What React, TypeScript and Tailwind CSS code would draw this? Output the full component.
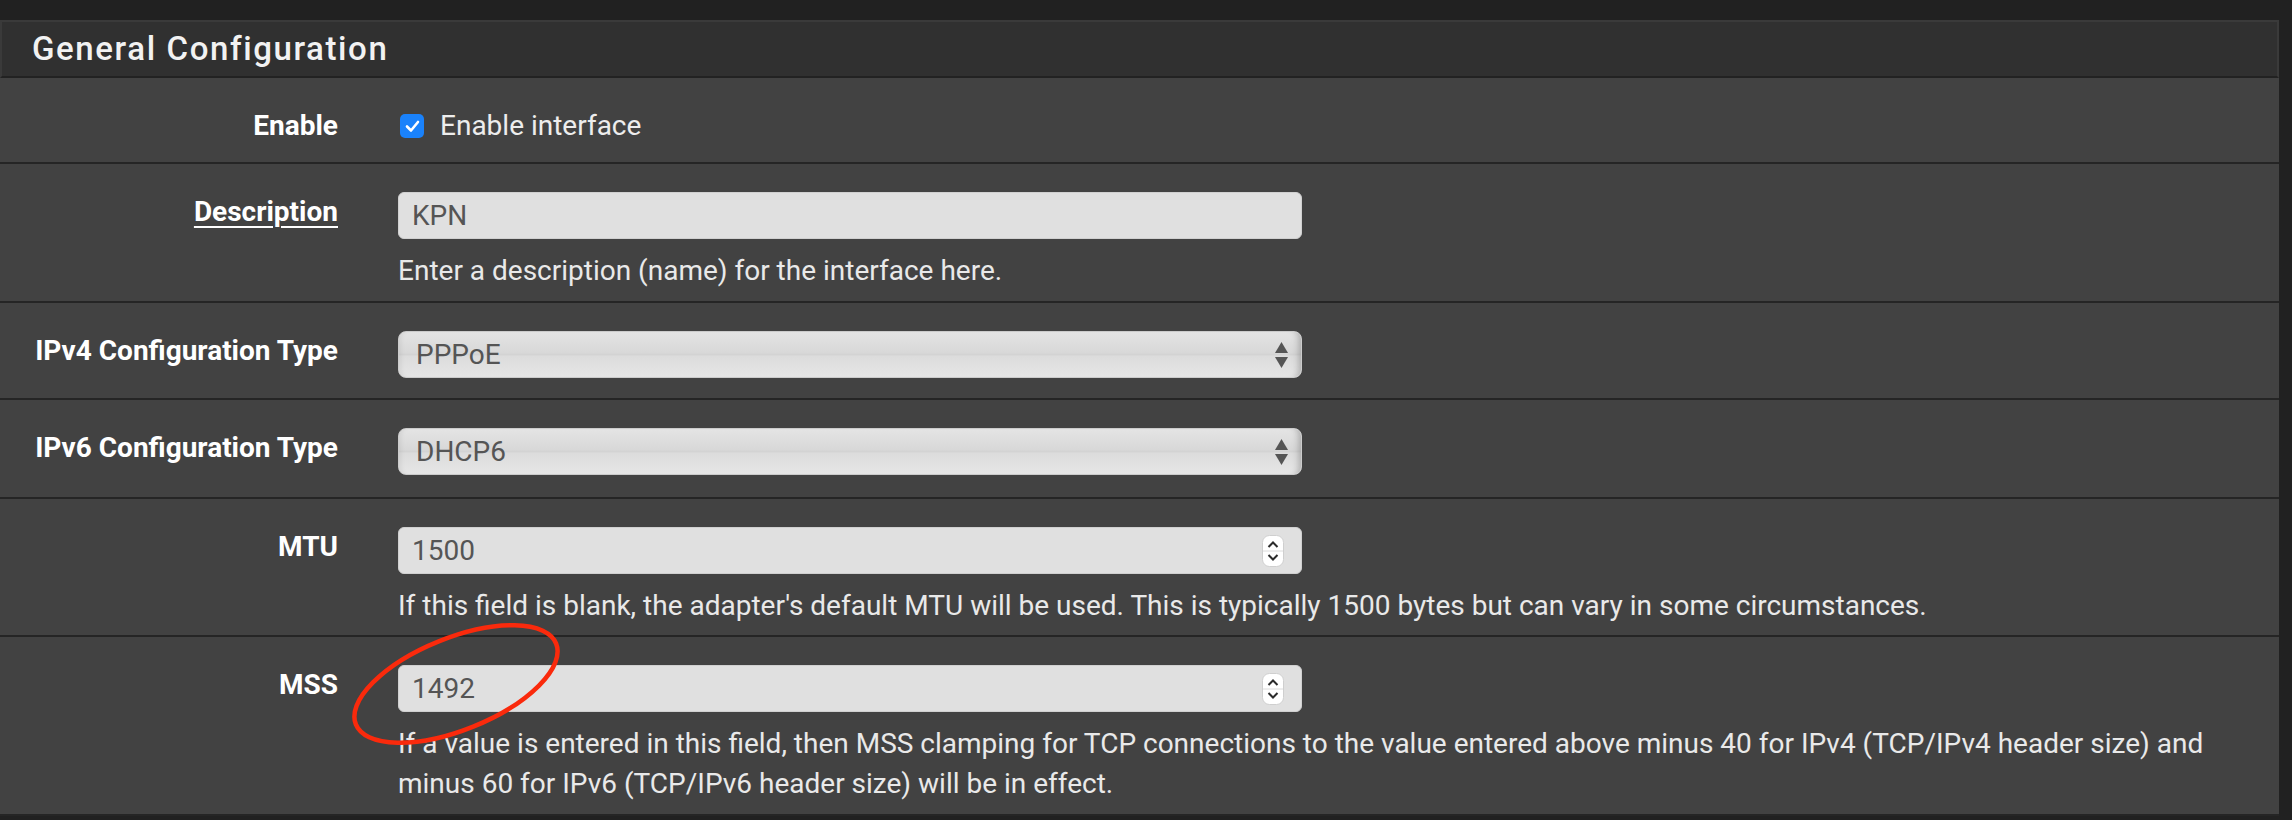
import React from "react";

const font = "font-['Roboto','Liberation_Sans',sans-serif]";

const Label = ({ text, link }: { text: string; link?: boolean }) => (
  <div className="w-[338px] shrink-0 pt-[28px] text-right text-[28px] font-bold leading-[40px] text-white">
    <span className={link ? "underline decoration-2 underline-offset-[5px]" : ""}>{text}</span>
  </div>
);

const Help = ({ children }: { children: React.ReactNode }) => (
  <p className="mt-[12px] text-[28px] leading-[40px] text-[#e9e9e9]">{children}</p>
);

const TextBox = ({ value }: { value: string }) => (
  <div className="flex h-[47px] w-[904px] items-center rounded-[6px] border border-[#d0d0d0] bg-[#e0e0e0] pl-[13px] text-[28px] text-[#555]">
    {value}
  </div>
);

const NumberBox = ({ value }: { value: string }) => (
  <div className="flex h-[47px] w-[904px] items-center justify-between rounded-[6px] border border-[#d0d0d0] bg-[#e0e0e0] pl-[13px] pr-[17px] text-[28px] text-[#555]">
    <span>{value}</span>
    <svg width="22" height="32" viewBox="0 0 22 32">
      <rect x="0.5" y="0.5" width="21" height="31" rx="7" fill="#fff" stroke="#cfcfcf" />
      <line x1="1" y1="16" x2="21" y2="16" stroke="#dcdcdc" />
      <polyline points="6.5,12 11,7.5 15.5,12" fill="none" stroke="#2b2b2b" strokeWidth="2" />
      <polyline points="6.5,20 11,24.5 15.5,20" fill="none" stroke="#2b2b2b" strokeWidth="2" />
    </svg>
  </div>
);

const SelectBox = ({ value }: { value: string }) => (
  <div className="flex h-[47px] w-[904px] items-center justify-between rounded-[8px] border border-[#cbcbcb] bg-[linear-gradient(to_bottom,#e4e4e4_0%,#d8d8d8_46%,#d3d3d3_50%,#dcdcdc_54%,#e6e6e6_100%)] pl-[17px] pr-[13px] text-[28px] text-[#555] shadow-[inset_-9px_0_7px_-7px_rgba(0,0,0,0.25),inset_6px_0_6px_-6px_rgba(0,0,0,0.12)]">
    <span>{value}</span>
    <svg width="13" height="26" viewBox="0 0 13 26">
      <polygon points="6.5,0 13,11 0,11" fill="#555" />
      <polygon points="0,15 13,15 6.5,26" fill="#555" />
    </svg>
  </div>
);

const Row = ({ children, pb }: { children: React.ReactNode; pb: string }) => (
  <div className={`flex border-b-2 border-[#252525] bg-[#424242] ${pb}`}>{children}</div>
);

export default function App() {
  return (
    <div className={`relative h-[820px] w-[2292px] overflow-hidden bg-[#212121] pt-[20px] ${font}`}>
      <div className="w-[2279px]">
        <div className="flex h-[58px] items-center border-x-2 border-t-2 border-b-2 border-x-[#3a3a3a] border-t-[#3a3a3a] border-b-[#222] bg-[#303030] pl-[30px]">
          <h2 className="text-[33px] font-medium tracking-[1.6px] text-[#f2f2f2]">General Configuration</h2>
        </div>

        <Row pb="pb-[16px]">
          <Label text="Enable" />
          <div className="ml-[60px] flex items-center pt-[28px] leading-[40px]">
            <div className="ml-[2px] flex h-[24px] w-[24px] items-center justify-center rounded-[5px] bg-[#1a82fb]">
              <svg width="15" height="13" viewBox="0 0 15 13">
                <polyline points="2,6.5 6,10.5 13,2" fill="none" stroke="#fff" strokeWidth="2.6" strokeLinecap="round" strokeLinejoin="round" />
              </svg>
            </div>
            <span className="ml-[16px] text-[28px] text-[#ededed]">Enable interface</span>
          </div>
        </Row>

        <Row pb="pb-[10px]">
          <Label text="Description" link />
          <div className="ml-[60px] flex-1 pr-[20px] pt-[28px]">
            <TextBox value="KPN" />
            <Help>Enter a description (name) for the interface here.</Help>
          </div>
        </Row>

        <Row pb="pb-[20px]">
          <Label text="IPv4 Configuration Type" />
          <div className="ml-[60px] flex-1 pt-[28px]">
            <SelectBox value="PPPoE" />
          </div>
        </Row>

        <Row pb="pb-[22px]">
          <Label text="IPv6 Configuration Type" />
          <div className="ml-[60px] flex-1 pt-[28px]">
            <SelectBox value="DHCP6" />
          </div>
        </Row>

        <Row pb="pb-[9px]">
          <Label text="MTU" />
          <div className="ml-[60px] flex-1 pr-[20px] pt-[28px]">
            <NumberBox value="1500" />
            <Help>
              If this field is blank, the adapter's default MTU will be used. This is typically 1500 bytes but can vary in
              some circumstances.
            </Help>
          </div>
        </Row>

        <Row pb="pb-[10px]">
          <Label text="MSS" />
          <div className="ml-[60px] flex-1 pr-[20px] pt-[28px]">
            <NumberBox value="1492" />
            <Help>
              If a value is entered in this field, then MSS clamping for TCP connections to the value entered above minus
              40 for IPv4 (TCP/IPv4 header size) and minus 60 for IPv6 (TCP/IPv6 header size) will be in effect.
            </Help>
          </div>
        </Row>
      </div>

      {/* hand-drawn annotation over the MSS field */}
      <svg className="pointer-events-none absolute left-[330px] top-[610px]" width="260" height="150" viewBox="0 0 260 150">
        <ellipse cx="126" cy="74" rx="108" ry="46" transform="rotate(-22 126 74)" fill="none" stroke="#fa2a0c" strokeWidth="4.5" />
      </svg>
    </div>
  );
}
